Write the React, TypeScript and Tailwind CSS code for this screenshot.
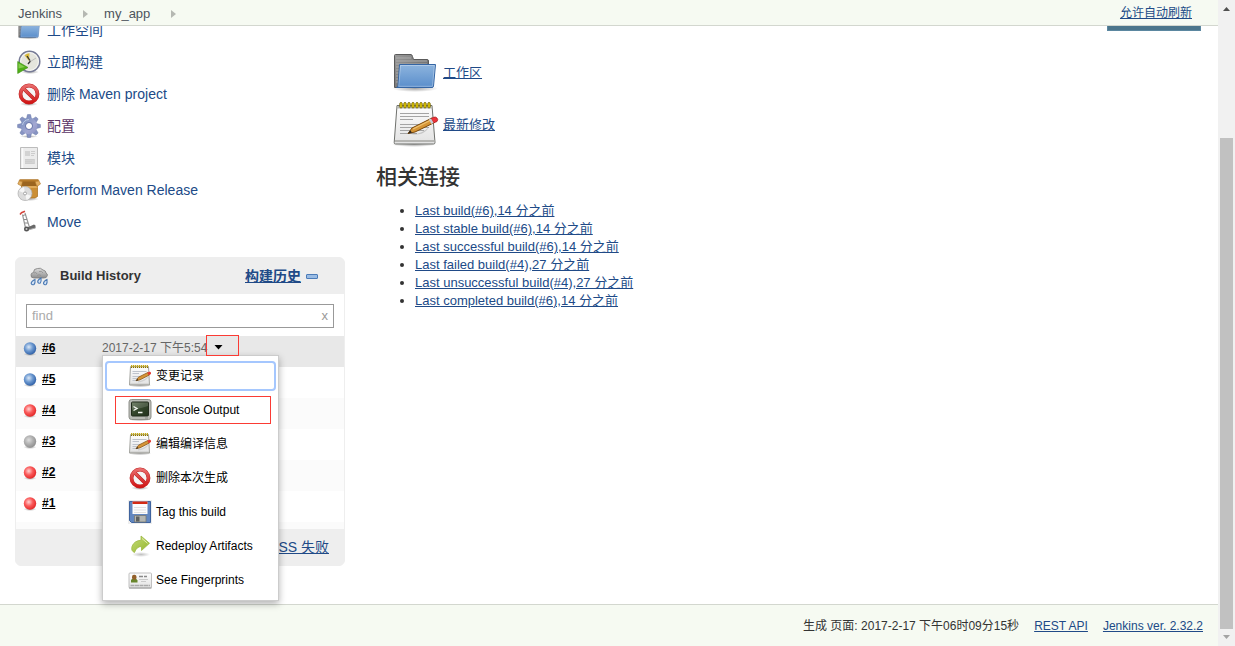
import React from "react";

type IconProps = { size?: number };

function Gradients() {
  return (
    <svg className="absolute size-0" aria-hidden="true">
      <defs>
        <linearGradient id="folderBlue" x1="0" y1="0" x2="0" y2="1">
          <stop offset="0" stopColor="#8db4de" />
          <stop offset="1" stopColor="#5a8ecb" />
        </linearGradient>
        <linearGradient id="folderGray" x1="0" y1="0" x2="1" y2="1">
          <stop offset="0" stopColor="#9a9a9a" />
          <stop offset="1" stopColor="#5c5c5c" />
        </linearGradient>
        <linearGradient id="paper" x1="0" y1="0" x2="0" y2="1">
          <stop offset="0" stopColor="#fdfdfd" />
          <stop offset="1" stopColor="#e2e2e2" />
        </linearGradient>
        <linearGradient id="gearBlue" x1="0" y1="0" x2="1" y2="1">
          <stop offset="0" stopColor="#6f8abb" />
          <stop offset="0.6" stopColor="#a3a8d2" />
          <stop offset="1" stopColor="#8d92c4" />
        </linearGradient>
        <linearGradient id="stopRed" gradientUnits="userSpaceOnUse" x1="0" y1="2" x2="0" y2="22">
          <stop offset="0" stopColor="#ea7272" />
          <stop offset="1" stopColor="#d01010" />
        </linearGradient>
        <linearGradient id="arrowGreen" x1="0" y1="0" x2="1" y2="1">
          <stop offset="0" stopColor="#c5dc7a" />
          <stop offset="1" stopColor="#93b52a" />
        </linearGradient>
        <linearGradient id="screen" x1="0" y1="0" x2="1" y2="1">
          <stop offset="0" stopColor="#5c6e50" />
          <stop offset="0.5" stopColor="#33452b" />
          <stop offset="1" stopColor="#22321c" />
        </linearGradient>
        <linearGradient id="cloud" x1="0" y1="0" x2="0" y2="1">
          <stop offset="0" stopColor="#dcdcdc" />
          <stop offset="1" stopColor="#8e8e8e" />
        </linearGradient>
        <radialGradient id="shade">
          <stop offset="0" stopColor="#000" stopOpacity="0.35" />
          <stop offset="1" stopColor="#000" stopOpacity="0" />
        </radialGradient>
        <radialGradient id="orbBlue" cx="0.4" cy="0.38" r="0.65">
          <stop offset="0" stopColor="#dbe8f7" />
          <stop offset="0.5" stopColor="#6d99d0" />
          <stop offset="1" stopColor="#2d5ea6" />
        </radialGradient>
        <radialGradient id="orbRed" cx="0.4" cy="0.38" r="0.65">
          <stop offset="0" stopColor="#ffd4d4" />
          <stop offset="0.5" stopColor="#fa5a5a" />
          <stop offset="1" stopColor="#e22626" />
        </radialGradient>
        <radialGradient id="orbGray" cx="0.4" cy="0.38" r="0.65">
          <stop offset="0" stopColor="#dedede" />
          <stop offset="0.5" stopColor="#b2b2b2" />
          <stop offset="1" stopColor="#8e8e8e" />
        </radialGradient>
      </defs>
    </svg>
  );
}

function Folder({ size = 24 }: IconProps) {
  return (
    <svg width={size} height={size} viewBox="0 0 48 48" className="shrink-0" aria-hidden="true">
      <ellipse cx="24" cy="39.500" rx="23" ry="3.500" fill="url(#shade)" />
      <path d="M3.500 38.500V6.500q0-1 1-1H20q1 0 1.500 2l1 3H36q1.500 0 1.500 1.500V38.500z" fill="url(#folderGray)" stroke="#5a5a5a" />
      <path d="M5 9h15M5 12h31M5 15h31M5 18h3M5 21h3M5 24h3M5 27h3M5 30h3M5 33h3" stroke="#b5b5b5" strokeWidth="0.8" />
      <path d="M8.500 15.500H44.500L42.500 37q-.2 1.500-1.500 1.500H5.500q1.300-.2 1.500-2z" fill="url(#folderBlue)" stroke="#3465a4" strokeLinejoin="round" />
      <path d="M9.500 16.500H43.400L41.500 37.300H7.700z" fill="none" stroke="#fff" strokeOpacity="0.3" />
    </svg>
  );
}

function Notepad() {
  return (
    <svg width="48" height="48" viewBox="0 0 48 48" className="shrink-0" aria-hidden="true">
      <ellipse cx="23" cy="43.500" rx="22" ry="2.500" fill="url(#shade)" />
      <path d="M6 4.500H41L44 41.500q0 1.500-1.500 1.500H4.500Q3 43 3.200 41.500z" fill="url(#paper)" stroke="#6f716d" />
      <path d="M4 40H43.500" stroke="#b5b5b2" strokeWidth="2" />
      <path d="M6 5H41L41.300 7.500H5.700z" fill="#b8b9b4" />
      {[10, 14, 18, 22, 26, 30, 34, 38].map((x) => (
        <rect key={x} x={x - 1.200} y="1.500" width="2.400" height="5.500" rx="1.200" fill="#edd400" stroke="#75650a" strokeWidth="0.9" />
      ))}
      <path d="M9 12.500H38M9 15.500H38M9 18.500H22M9 23.500H38M9 26.500H38M9 29.500H33M9 32.500H26" stroke="#a4a4a4" />
      <path d="M20 33Q30 34 38 26L36 29Q30 35 20 33" fill="#000" opacity="0.16" />
      <path d="M17 32.500L21 27L41 17L43.500 21.500L24 31z" fill="#d69536" stroke="#7a4708" strokeLinejoin="round" />
      <path d="M22 28L41 18.500" stroke="#f0c271" strokeWidth="1.300" />
      <path d="M17 32.500L19.200 29.500L21 31.500z" fill="#222" />
      <path d="M40 17.500L42.500 22L46 20.500Q47.500 18.500 46 17Q44.500 15.500 42.500 16.300z" fill="#ed333b" stroke="#a41212" strokeWidth="0.7" />
      <path d="M39 18L41.500 22.500" stroke="#c9ccd4" strokeWidth="2.500" />
    </svg>
  );
}

function SmallNotepad() {
  return (
    <svg width="24" height="24" viewBox="0 0 24 24" className="shrink-0" aria-hidden="true">
      <ellipse cx="12" cy="21.500" rx="11.500" ry="1.800" fill="url(#shade)" />
      <path d="M2.500 2.500H20.500L21.500 21H1.500z" fill="url(#paper)" stroke="#a3a49f" />
      <path d="M2 20.500H21" stroke="#b2b2ae" strokeWidth="1.500" />
      <path d="M3 2.500H20" stroke="#c2a81c" strokeWidth="3" strokeDasharray="1.300 0.700" />
      <path d="M3 3.500H20" stroke="#7d6a10" strokeWidth="1" strokeDasharray="1 1" />
      <path d="M4.500 7.500H18.500M4.500 9.500H11M4.500 12.500H14M4.500 14.500H10M4.500 16.500H9" stroke="#bfc4cc" />
      <path d="M8 16.700L10.500 13.200L19.800 8.500L21.300 11L12 15.800z" fill="#d69536" stroke="#8b5716" strokeWidth="0.8" strokeLinejoin="round" />
      <path d="M8 16.700L9.300 14.900L10.300 16.200z" fill="#222" />
      <path d="M19.300 8.700L21.800 7.500Q23.500 8 23 10L20.900 11.200z" fill="#e23a30" />
      <path d="M10 17.800Q16 17.500 20 13" fill="none" stroke="#000" strokeOpacity="0.1" strokeWidth="1.300" />
    </svg>
  );
}

function Clock() {
  return (
    <svg width="24" height="24" viewBox="0 0 24 24" className="shrink-0" aria-hidden="true">
      <ellipse cx="13" cy="22" rx="9" ry="2" fill="url(#shade)" />
      <circle cx="12.500" cy="11.500" r="10.300" fill="#ecebe6" stroke="#777b96" strokeWidth="1.500" />
      <circle cx="12.500" cy="11.500" r="8.900" fill="#e5e5dd" stroke="#f7f7f5" strokeWidth="0.9" />
      <path d="M12 11L7.500 5.200Q10 3.300 12.500 3.300z" fill="#d9b93b" />
      <path d="M10 6L13 10.500M13.500 11L11 14" fill="none" stroke="#333" strokeWidth="1.300" />
      <path d="M13.500 11.500L19 8" stroke="#aaa" strokeWidth="0.7" />
      <path d="M0.700 11.500L11 17.500L0.700 23.500z" fill="#4fae17" stroke="#3c8d12" strokeWidth="0.6" strokeLinejoin="round" />
      <path d="M1.500 13.300L8 17L1.500 18.500z" fill="#85cc4e" />
    </svg>
  );
}

function Stop() {
  return (
    <svg width="24" height="24" viewBox="0 0 24 24" className="shrink-0" aria-hidden="true">
      <ellipse cx="12" cy="22" rx="9" ry="2" fill="url(#shade)" />
      <circle cx="12" cy="12" r="8.500" fill="#f5f5f5" stroke="#c02828" strokeWidth="3.800" />
      <path d="M6.200 6.200L17.800 17.800" stroke="#b92020" strokeWidth="3.600" />
      <circle cx="12" cy="12" r="8.500" fill="none" stroke="url(#stopRed)" strokeWidth="2.800" />
      <path d="M5.800 5.800L18.200 18.200" stroke="url(#stopRed)" strokeWidth="2.600" />
    </svg>
  );
}

function Gear() {
  return (
    <svg width="24" height="24" viewBox="0 0 24 24" className="shrink-0" aria-hidden="true">
      <ellipse cx="12" cy="22.500" rx="9" ry="1.500" fill="url(#shade)" />
      <g fill="#8793c2" stroke="#6678a8" strokeWidth="0.5">
        {[0, 45, 90, 135, 180, 225, 270, 315].map((a) => (
          <path key={a} transform={`rotate(${a} 12 12)`} d="M9.300 5.500L10.500 0.600H13.500L14.700 5.500z" />
        ))}
      </g>
      <path fill="url(#gearBlue)" fillRule="evenodd" d="M12 3.700A8.300 8.300 0 1 1 12 20.300A8.300 8.300 0 1 1 12 3.700zM12 9A3 3 0 1 0 12 15A3 3 0 1 0 12 9z" />
      <circle cx="12" cy="12" r="3.600" fill="none" stroke="#6f7dae" strokeWidth="1" />
      <path d="M5.500 11Q6.500 6 12 5.500" fill="none" stroke="#c3cfe8" strokeWidth="0.9" />
    </svg>
  );
}

function DocumentIcon() {
  return (
    <svg width="24" height="24" viewBox="0 0 24 24" className="shrink-0" aria-hidden="true">
      <path d="M3.500 1.500H20.500V22.500H3.500z" fill="#ececec" stroke="#bcbcbc" />
      <path d="M3 22.500H21" stroke="#989898" />
      <path d="M5.500 2V22" stroke="#fafafa" strokeWidth="1.500" />
      <path d="M8 5H13V10H8zM8 13H18V18H8z" fill="#d3d3d3" />
      <path d="M14 5.500H18M14 7.500H18M14 9.500H17M8 13.500H17M8 15.500H15M8 17.500H17" stroke="#cdcdcd" />
    </svg>
  );
}

function Box() {
  return (
    <svg width="24" height="24" viewBox="0 0 24 24" className="shrink-0" aria-hidden="true">
      <ellipse cx="12" cy="21" rx="10" ry="2" fill="url(#shade)" />
      <path d="M4.500 4H20.500V18.500L18 20H4.500z" fill="#cb8f36" stroke="#a36a1a" strokeWidth="0.7" />
      <path d="M3 1.500H21V8H4.500z" fill="#9b651f" />
      <path d="M5 8H20.500V10H5z" fill="#e0ac5b" />
      <path d="M2.500 2L0.800 6L4.500 8L5.500 3.500zM21.500 2L23.500 6L19.800 8.500L18 3.500z" fill="#e3b063" stroke="#ae7626" strokeWidth="0.6" />
      <path d="M2.500 1.500H21.500V3.500H2.500z" fill="#b87c2a" />
      <circle cx="8" cy="15.500" r="7" fill="#dcdcdc" stroke="#adadad" strokeWidth="0.7" />
      <path d="M8 15.500L2 13Q4 9.600 7 9zM8 15.500L14 17.800Q12 21.500 9.500 22z" fill="#f6f6f6" />
      <circle cx="8" cy="15.500" r="1.500" fill="#fff" stroke="#9c9c9c" strokeWidth="0.9" />
    </svg>
  );
}

function HandTruck() {
  return (
    <svg width="24" height="24" viewBox="0 0 24 24" className="shrink-0" aria-hidden="true">
      <path d="M5.500 4.500L8.500 18M8 3L12.500 17.500" fill="none" stroke="#9a9a9a" strokeWidth="1.200" />
      <path d="M3 4.500L4.500 2.700L8 1.300" fill="none" stroke="#d3443c" strokeWidth="1.500" />
      <path d="M6 5.500L9 4.500M7 9.500H10M7.500 13H11" stroke="#8b8b8b" />
      <path d="M8 18.500L17 14.500L18.500 15.500V18L9 20.500z" fill="#696969" />
      <path d="M9 20.500L18.500 18" stroke="#aaa" />
      <circle cx="9.500" cy="19" r="2.500" fill="#555" />
      <circle cx="9.500" cy="19" r="1" fill="#c8c8c8" />
    </svg>
  );
}

function Rain() {
  return (
    <svg width="20" height="20" viewBox="0 0 20 20" className="shrink-0" aria-hidden="true">
      <path d="M5 12Q1.500 12 2 8.800Q2.200 6.700 4.500 6.500Q4.500 2.500 8.500 2.500Q11.500 1.300 14 4Q17 4.500 17 7Q18.800 7.800 18.300 9.700Q17.700 12 15 12z" fill="url(#cloud)" stroke="#7c7c7c" strokeWidth="0.8" />
      <path d="M5 7Q7 5.500 8 8M10 5.500Q13 4.500 14 7M8 9.500Q10 8 12 9.500" fill="none" stroke="#8f8f8f" strokeWidth="0.8" />
      <g fill="#d7e5f5" stroke="#4a79b4" strokeWidth="1.100">
        <path d="M6 13.500Q2 15.500 2.200 17.500Q3 19.200 5 18.500Q6.500 17 6 13.500z" />
        <path d="M12 12Q8.500 14 8.700 16Q9.500 17.700 11.300 17Q12.500 15.500 12 12z" />
        <path d="M18 13.500Q14.300 15.500 14.500 17.500Q15.300 19.200 17.200 18.500Q18.500 17 18 13.500z" />
      </g>
    </svg>
  );
}

function Terminal() {
  return (
    <svg width="24" height="24" viewBox="0 0 24 24" className="shrink-0" aria-hidden="true">
      <ellipse cx="12" cy="21.500" rx="11" ry="2" fill="url(#shade)" />
      <rect x="1" y="1.500" width="22" height="20" rx="2.500" fill="#b9bbb5" stroke="#8f918b" />
      <rect x="3.500" y="4" width="17" height="14" rx="1" fill="url(#screen)" stroke="#232c1d" />
      <path d="M4 4.500H20V8Q12 11 4 11.500z" fill="#fff" opacity="0.15" />
      <path d="M5.500 8.500L9 10.500L5.500 12.500M10 14.500H14.500" fill="none" stroke="#f2f5ef" strokeWidth="1.400" />
      <path d="M17 20H20" stroke="#8a8c86" />
    </svg>
  );
}

function Floppy() {
  return (
    <svg width="24" height="24" viewBox="0 0 24 24" className="shrink-0" aria-hidden="true">
      <path d="M0 0H24V24H0z" fill="#eee" />
      <path d="M1.500 1.500H22.500V22.500H3.500L1.500 20.500z" fill="#6287c0" stroke="#3f639e" />
      <path d="M4.500 1.500H19.500V14H4.500z" fill="#fcfcfc" />
      <path d="M4.500 1.500H19.500V4H4.500z" fill="#d42a14" />
      <path d="M6 7.500H18M6 10H18M6 12.500H18" stroke="#e0e0e0" />
      <path d="M6.500 15.500H18V22H6.500z" fill="#b4b6b2" stroke="#767975" strokeWidth="0.8" />
      <path d="M8 16.500H11.500V21.500H8z" fill="#5c605f" />
    </svg>
  );
}

function Redo() {
  return (
    <svg width="24" height="24" viewBox="0 0 24 24" className="shrink-0" aria-hidden="true">
      <ellipse cx="13" cy="20.500" rx="9" ry="2.500" fill="url(#shade)" opacity="0.7" />
      <path d="M13 2L21.500 9.300L13.500 16.500V12.500Q8.500 12.500 6.500 18.500Q2.800 17 4 12.500Q6 6.800 13 6.200z" fill="url(#arrowGreen)" stroke="#9db843" strokeWidth="0.8" strokeLinejoin="round" />
      <path d="M14 4.500L19.500 9.300" stroke="#e2eeae" />
    </svg>
  );
}

function IdCard() {
  return (
    <svg width="24" height="24" viewBox="0 0 24 24" className="shrink-0" aria-hidden="true">
      <rect x="1" y="5" width="22.500" height="15" rx="1" fill="url(#paper)" stroke="#c0c0c0" />
      <path d="M1 20H23.500" stroke="#9c9c9c" />
      <path d="M3 14V12Q3.500 10.500 6 10.500Q9 10.500 9.500 12.500V14.500H3z" fill="#68852b" />
      <rect x="4" y="6.800" width="4.500" height="5" rx="2" fill="#93602a" />
      <path d="M11 8.500H19" stroke="#8a8a8a" strokeWidth="1.300" strokeDasharray="4 1" />
      <path d="M11 11.500H20M13 13.500H18" stroke="#cacaca" />
      <path d="M2.500 17.500H22" stroke="#aaa" strokeWidth="1.500" strokeDasharray="4 0.500" />
    </svg>
  );
}

const orbFill = { blue: "url(#orbBlue)", red: "url(#orbRed)", gray: "url(#orbGray)" };

function Orb({ color }: { color: keyof typeof orbFill }) {
  return (
    <svg width="16" height="16" viewBox="0 0 16 16" className="shrink-0" aria-hidden="true">
      <ellipse cx="8" cy="14.200" rx="6.500" ry="1.800" fill="url(#shade)" />
      <circle cx="8" cy="8.500" r="6.200" fill={orbFill[color]} />
    </svg>
  );
}

function Crumb({ label }: { label: string }) {
  return (
    <li className="flex items-center">
      <a href="#" className="text-[#4d545d]">{label}</a>
      <svg width="5" height="8" viewBox="0 0 5 8" className="mr-4 ml-[21px]" aria-hidden="true">
        <path d="M0 0L5 4L0 8z" fill="#b5b8b2" />
      </svg>
    </li>
  );
}

const tasks = [
  { label: "工作空间", icon: <Folder /> },
  { label: "立即构建", icon: <Clock /> },
  { label: "删除 Maven project", icon: <Stop /> },
  { label: "配置", icon: <Gear />, visited: true },
  { label: "模块", icon: <DocumentIcon /> },
  { label: "Perform Maven Release", icon: <Box /> },
  { label: "Move", icon: <HandTruck /> },
];

const menuItems = [
  { label: "变更记录", icon: <SmallNotepad />, focused: true },
  { label: "Console Output", icon: <Terminal />, marked: true },
  { label: "编辑编译信息", icon: <SmallNotepad /> },
  { label: "删除本次生成", icon: <Stop /> },
  { label: "Tag this build", icon: <Floppy /> },
  { label: "Redeploy Artifacts", icon: <Redo /> },
  { label: "See Fingerprints", icon: <IdCard /> },
];

const builds: { id: string; color: keyof typeof orbFill; date?: string }[] = [
  { id: "#6", color: "blue", date: "2017-2-17 下午5:54" },
  { id: "#5", color: "blue" },
  { id: "#4", color: "red" },
  { id: "#3", color: "gray" },
  { id: "#2", color: "red" },
  { id: "#1", color: "red" },
];

const permalinks = [
  "Last build(#6),14 分之前",
  "Last stable build(#6),14 分之前",
  "Last successful build(#6),14 分之前",
  "Last failed build(#4),27 分之前",
  "Last unsuccessful build(#4),27 分之前",
  "Last completed build(#6),14 分之前",
];

function BuildMenu() {
  return (
    <ul className="absolute top-[19px] left-0 z-20 w-[177px] border border-[#ccc] bg-white px-[2px] py-[3px] text-xs text-black shadow-[0_3px_7px_rgba(0,0,0,0.3)]">
      {menuItems.map((item) => (
        <li key={item.label} className="relative flex h-[34px] items-center">
          <button
            type="button"
            className={`flex h-[30px] w-full items-center gap-1 rounded-sm border-2 pl-[21px] ${item.focused ? "border-[#a5c7fe]" : "border-transparent"}`}
          >
            {item.icon}
            <span>{item.label}</span>
          </button>
          {item.marked && <span className="pointer-events-none absolute inset-y-[3px] right-[5px] left-[10px] border border-[#fb3b34]" />}
        </li>
      ))}
    </ul>
  );
}

function BuildHistory() {
  return (
    <section className="mt-[19px] ml-[15px] rounded-md border border-[#eee] bg-[#eee]">
      <div className="flex h-9 items-center pr-[26px] pl-[13px]">
        <Rain />
        <h2 className="ml-[11px] flex-1 text-[13px] font-bold text-[#333]">Build History</h2>
        <a href="#" className="text-sm font-bold text-[#204a87] underline">构建历史</a>
        <svg width="12" height="6" viewBox="0 0 12 6" className="ml-[5px]" aria-hidden="true">
          <rect x="0.500" y="1.500" width="11" height="4" rx="0.500" fill="#9abce4" stroke="#4c7cb8" />
        </svg>
      </div>
      <div className="bg-white">
        <div className="flex px-[10px] pt-[10px] pb-2">
          <div className="flex h-6 flex-1 items-center border border-[#999] px-[5px]">
            <input aria-label="find" placeholder="find" className="min-w-0 flex-1 bg-transparent text-[13px] outline-none placeholder:text-[#aaa]" />
            <button type="button" className="text-[13px] leading-4 text-[#999]">x</button>
          </div>
        </div>
        <table className="w-full table-fixed border-collapse text-xs">
          <tbody>
            {builds.map((b, i) => (
              <tr key={b.id} className={`h-[31px] ${i === 0 ? "bg-[#e8e8e8]" : i % 2 ? "bg-white" : "bg-[#fbfbfb]"}`}>
                <td className="w-[86px] p-0 align-top">
                  <div className="flex items-center gap-1 pt-1 pl-[6px]">
                    <Orb color={b.color} />
                    <a href="#" className="font-bold text-black underline">{b.id}</a>
                  </div>
                </td>
                <td className="p-0 align-top">
                  {b.date && (
                    <div className="relative flex h-[31px] items-start pt-1">
                      <a href="#" className="whitespace-nowrap text-[#666]">{b.date}</a>
                      <button type="button" aria-label="menu" className="absolute top-[9px] left-[112px]">
                        <svg width="9" height="5" viewBox="0 0 9 5" aria-hidden="true">
                          <path d="M0.500 0H8.500L4.500 4.500z" fill="#000" />
                        </svg>
                      </button>
                      <span className="pointer-events-none absolute -top-px left-[104px] z-30 h-[21px] w-[33px] border border-[#fb3b34]" />
                      <BuildMenu />
                    </div>
                  )}
                </td>
              </tr>
            ))}
          </tbody>
        </table>
        <div className="h-[7px] bg-[#fbfbfb]" />
      </div>
      <div className="flex h-9 items-center justify-end pr-[15px]">
        <a href="#" className="text-sm text-[#204a87] underline">RSS 失败</a>
      </div>
    </section>
  );
}

function ScrollBar() {
  return (
    <div className="flex w-[17px] shrink-0 flex-col items-center bg-[#f1f1f1]" aria-hidden="true">
      <svg width="17" height="17" viewBox="0 0 17 17"><path d="M5 11L8.500 7L12 11z" fill="#505050" /></svg>
      <div className="h-[121px]" />
      <div className="w-[13px] flex-1 bg-[#c1c1c1]" />
      <svg width="17" height="17" viewBox="0 0 17 17"><path d="M5 6L8.500 10L12 6z" fill="#a3a3a3" /></svg>
    </div>
  );
}

export default function App() {
  return (
    <div className="flex min-h-screen bg-white font-['Liberation_Sans','Noto_Sans_CJK_SC',sans-serif] text-[13px] leading-[18px] text-[#333]">
      <Gradients />
      <div className="flex min-w-0 flex-1 flex-col">
        <header className="relative z-10 flex h-[26px] items-center justify-between border-b border-[#d3d7cf] bg-[#f6faf2] pr-[26px] pl-[18px]">
          <ol className="flex items-center pt-[2px]">
            <Crumb label="Jenkins" />
            <Crumb label="my_app" />
          </ol>
          <a href="#" className="text-xs text-[#204a87] underline">允许自动刷新</a>
        </header>

        <div className="flex flex-1">
          <aside className="w-[345px] shrink-0">
            <ul className="-mt-3 text-sm">
              {tasks.map((t) => (
                <li key={t.label} className="flex h-8 items-center gap-[6px] pl-[17px]">
                  {t.icon}
                  <a href="#" className={t.visited ? "text-[#5c3566]" : "text-[#204a87]"}>{t.label}</a>
                </li>
              ))}
            </ul>
            <BuildHistory />
          </aside>

          <main className="ml-[31px] flex-1 pt-[23px]">
            <ul className="flex flex-col gap-1 pl-[15px]">
              <li className="flex h-12 items-center gap-1">
                <Folder size={48} />
                <a href="#" className="text-[#204a87] underline">工作区</a>
              </li>
              <li className="flex h-12 items-center gap-1">
                <Notepad />
                <a href="#" className="text-[#204a87] underline">最新修改</a>
              </li>
            </ul>
            <h2 className="mt-4 text-[21px] leading-6 font-medium">相关连接</h2>
            <ul className="mt-[13px] list-disc pl-[39px]">
              {permalinks.map((p) => (
                <li key={p}>
                  <a href="#" className="text-[#204a87] underline">{p}</a>
                </li>
              ))}
            </ul>
          </main>
          <button type="button" aria-label="编辑说明" className="mr-[17px] h-[5px] w-[94px] border-x border-b border-[#5b87a0] bg-[#4b758b]" />
        </div>

        <footer className="flex h-[42px] items-center justify-end gap-[15px] border-t border-[#d3d7cf] bg-[#f6faf2] pr-[15px] text-xs">
          <span>生成 页面: 2017-2-17 下午06时09分15秒</span>
          <a href="#" className="text-[#204a87] underline">REST API</a>
          <a href="#" className="text-[#204a87] underline">Jenkins ver. 2.32.2</a>
        </footer>
      </div>
      <ScrollBar />
    </div>
  );
}
